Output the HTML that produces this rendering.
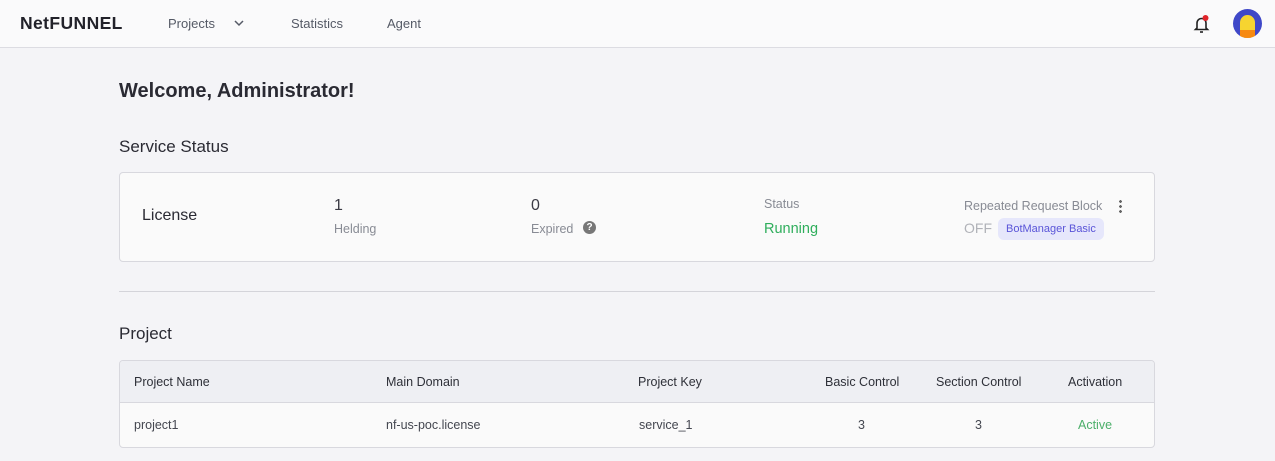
<!DOCTYPE html>
<html><head><meta charset="utf-8"><style>
*{box-sizing:border-box;margin:0;padding:0}
body{width:1275px;height:461px;overflow:hidden;background:#f4f4f7;font-family:"Liberation Sans",sans-serif;color:#2a2a33;position:relative}
.a{position:absolute;white-space:nowrap}
.hdr{position:absolute;left:0;top:0;width:1275px;height:48px;background:#fafafb;border-bottom:1px solid #dcdce2}
.nav{font-size:13px;color:#555a66}
.card{position:absolute;left:119px;top:172px;width:1036px;height:90px;background:#fafafa;border:1px solid #d8d8de;border-radius:4px}
.tbl{position:absolute;left:119px;top:360px;width:1036px;height:88px;background:#fafafa;border:1px solid #d8d8de;border-radius:4px;overflow:hidden}
.th{position:absolute;left:0;top:0;width:100%;height:42px;background:#eeeff3;border-bottom:1px solid #d8d8de}
.t{font-size:12.5px;color:#2e3038}
.r{font-size:12.5px;color:#444750}
</style></head><body>
<div class="hdr">
<div class="a" style="left:20px;top:13px;font-size:17.5px;font-weight:bold;letter-spacing:0.4px;color:#22222a">NetFUNNEL</div>
<div class="a nav" style="left:168px;top:16px">Projects</div>
<svg class="a" style="left:233px;top:19px" width="12" height="8" viewBox="0 0 12 8"><path d="M2 2l4 4 4-4" stroke="#555a66" stroke-width="1.5" fill="none"/></svg>
<div class="a nav" style="left:291px;top:16px">Statistics</div>
<div class="a nav" style="left:387px;top:16px">Agent</div>
<svg class="a" style="left:1192px;top:13px" width="20" height="22" viewBox="0 0 20 22"><path d="M5 15V10a4.5 4.5 0 0 1 9 0v5l1.5 1.5h-12z" stroke="#222" stroke-width="1.6" fill="none"/><path d="M8 19h3" stroke="#222" stroke-width="1.6"/><circle cx="13.5" cy="5" r="3" fill="#e0242a"/></svg>
<div class="a" style="left:1233px;top:9px;width:29px;height:29px;border-radius:50%;background:#3f48c8;overflow:hidden">
<div style="position:absolute;left:7px;top:6px;width:15px;height:23px;border-radius:8px 8px 0 0;background:#f6d430"></div>
<div style="position:absolute;left:7px;top:21px;width:15px;height:8px;background:#f78a12"></div></div>
</div>
<div class="a" style="left:119px;top:80px;font-size:20px;font-weight:bold;color:#2a2a33">Welcome, Administrator!</div>
<div class="a" style="left:119px;top:137px;font-size:17px;color:#2a2a33">Service Status</div>
<div class="card">
<div class="a" style="left:22px;top:34px;font-size:16px;color:#2a2a33">License</div>
<div class="a" style="left:214px;top:24px;font-size:16px;color:#3a3a44">1</div>
<div class="a" style="left:214px;top:49px;font-size:12.5px;color:#888b94">Helding</div>
<div class="a" style="left:411px;top:24px;font-size:16px;color:#3a3a44">0</div>
<div class="a" style="left:411px;top:49px;font-size:12.5px;color:#888b94">Expired</div>
<div class="a" style="left:463px;top:48px;width:13px;height:13px;border-radius:50%;background:#777;color:#fff;font-size:10px;font-weight:bold;text-align:center;line-height:13px">?</div>
<div class="a" style="left:644px;top:24px;font-size:12.5px;color:#888b94">Status</div>
<div class="a" style="left:644px;top:48px;font-size:14.5px;color:#2fae5c">Running</div>
<div class="a" style="left:844px;top:26px;font-size:12.5px;color:#888b94">Repeated Request Block</div>
<div class="a" style="left:999px;top:26px;width:3px;height:14px;background:radial-gradient(circle,#666 1.3px,transparent 1.5px) 0 0/3px 5px"></div>
<div class="a" style="left:844px;top:47px;font-size:14px;color:#b0b2b8">OFF</div>
<div class="a" style="left:878px;top:45px;height:22px;padding:0 8px;border-radius:6px;background:#e6e7fb;color:#5a55d8;font-size:11px;line-height:22px">BotManager Basic</div>
</div>
<div class="a" style="left:119px;top:291px;width:1036px;height:1px;background:#d4d4da"></div>
<div class="a" style="left:119px;top:324px;font-size:17px;color:#2a2a33">Project</div>
<div class="tbl">
<div class="th"></div>
<div class="a t" style="left:14px;top:14px">Project Name</div>
<div class="a t" style="left:266px;top:14px">Main Domain</div>
<div class="a t" style="left:518px;top:14px">Project Key</div>
<div class="a t" style="left:705px;top:14px">Basic Control</div>
<div class="a t" style="left:816px;top:14px">Section Control</div>
<div class="a t" style="left:948px;top:14px">Activation</div>
<div class="a r" style="left:14px;top:57px">project1</div>
<div class="a r" style="left:266px;top:57px">nf-us-poc.license</div>
<div class="a r" style="left:519px;top:57px">service_1</div>
<div class="a r" style="left:738px;top:57px">3</div>
<div class="a r" style="left:855px;top:57px">3</div>
<div class="a r" style="left:958px;top:57px;color:#4caf6a">Active</div>
</div>
</body></html>
